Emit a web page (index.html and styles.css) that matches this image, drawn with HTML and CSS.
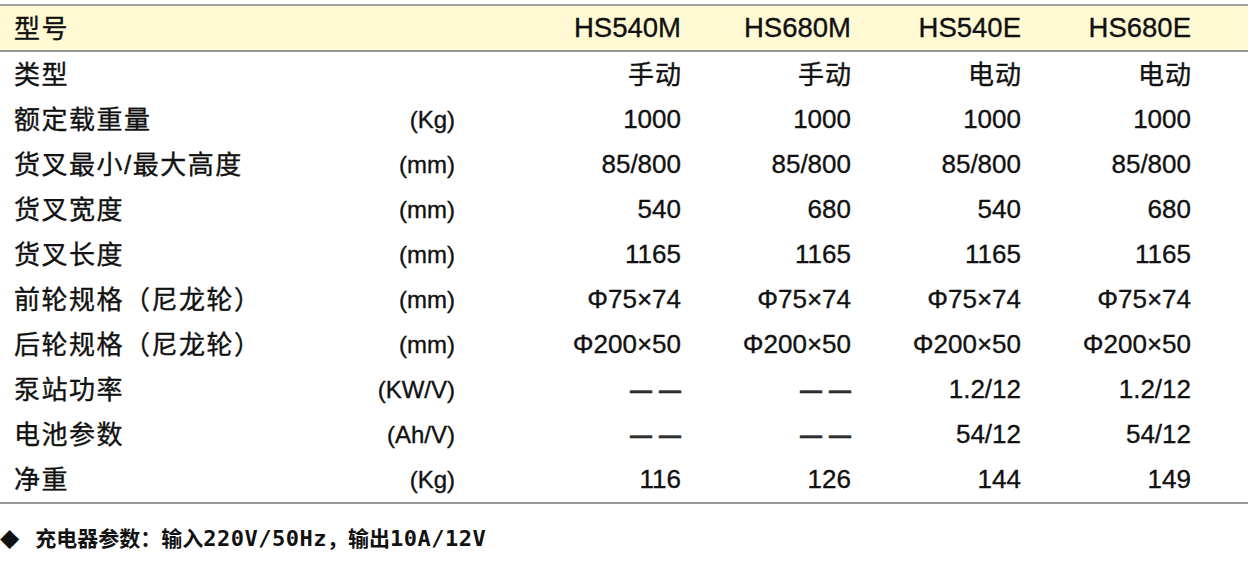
FILE: index.html
```html
<!DOCTYPE html>
<html lang="zh-CN">
<head>
    <meta charset="UTF-8">
    <title>HS 系列参数</title>
    <link rel="stylesheet" href="styles.css">
</head>
<body>

    <!-- Spec table -->
    <div class="spec">
        <div class="row head">
            <span class="label">型号</span>
            <span class="unit"></span>
            <span class="val">HS540M</span>
            <span class="val">HS680M</span>
            <span class="val">HS540E</span>
            <span class="val">HS680E</span>
        </div>
        <div class="row">
            <span class="label">类型</span>
            <span class="unit"></span>
            <span class="val cn">手动</span>
            <span class="val cn">手动</span>
            <span class="val cn">电动</span>
            <span class="val cn">电动</span>
        </div>
        <div class="row">
            <span class="label">额定载重量</span>
            <span class="unit">(Kg)</span>
            <span class="val">1000</span>
            <span class="val">1000</span>
            <span class="val">1000</span>
            <span class="val">1000</span>
        </div>
        <div class="row">
            <span class="label">货叉最小/最大高度</span>
            <span class="unit">(mm)</span>
            <span class="val">85/800</span>
            <span class="val">85/800</span>
            <span class="val">85/800</span>
            <span class="val">85/800</span>
        </div>
        <div class="row">
            <span class="label">货叉宽度</span>
            <span class="unit">(mm)</span>
            <span class="val">540</span>
            <span class="val">680</span>
            <span class="val">540</span>
            <span class="val">680</span>
        </div>
        <div class="row">
            <span class="label">货叉长度</span>
            <span class="unit">(mm)</span>
            <span class="val">1165</span>
            <span class="val">1165</span>
            <span class="val">1165</span>
            <span class="val">1165</span>
        </div>
        <div class="row">
            <span class="label">前轮规格（尼龙轮）</span>
            <span class="unit">(mm)</span>
            <span class="val">Φ75×74</span>
            <span class="val">Φ75×74</span>
            <span class="val">Φ75×74</span>
            <span class="val">Φ75×74</span>
        </div>
        <div class="row">
            <span class="label">后轮规格（尼龙轮）</span>
            <span class="unit">(mm)</span>
            <span class="val">Φ200×50</span>
            <span class="val">Φ200×50</span>
            <span class="val">Φ200×50</span>
            <span class="val">Φ200×50</span>
        </div>
        <div class="row">
            <span class="label">泵站功率</span>
            <span class="unit">(KW/V)</span>
            <span class="val"><span class="dash">——</span></span>
            <span class="val"><span class="dash">——</span></span>
            <span class="val">1.2/12</span>
            <span class="val">1.2/12</span>
        </div>
        <div class="row">
            <span class="label">电池参数</span>
            <span class="unit">(Ah/V)</span>
            <span class="val"><span class="dash">——</span></span>
            <span class="val"><span class="dash">——</span></span>
            <span class="val">54/12</span>
            <span class="val">54/12</span>
        </div>
        <div class="row">
            <span class="label">净重</span>
            <span class="unit">(Kg)</span>
            <span class="val">116</span>
            <span class="val">126</span>
            <span class="val">144</span>
            <span class="val">149</span>
        </div>
    </div>

    <!-- Charger note -->
    <p class="note"><span class="diamond">◆</span>充电器参数：输入<span class="mono">220V/50Hz</span>，输出<span class="mono">10A/12V</span></p>

</body>
</html>
```

FILE: styles.css
```css
/* General Styles */
body {
    font-family: "Liberation Sans", "Noto Sans CJK SC", sans-serif;
    margin: 0;
    background-color: rgb(255, 255, 255);
    color: rgb(17, 17, 17);
}

/* Spec table */
.spec {
    width: 1248px;
    margin-top: 4px;
    border-bottom: 2px solid rgb(150, 150, 150);
    -webkit-text-stroke: 0.35px rgb(17, 17, 17);
}

.row {
    display: grid;
    grid-template-columns: 290px 151px 226px 170px 170px 170px;
    align-items: center;
    height: 45px;
    padding: 0 57px 0 14px;
    font-size: 26px;
}

.row.head {
    height: 44px;
    background-color: rgb(255, 249, 212);
    border-top: 2px solid rgb(160, 160, 160);
    border-bottom: 2px solid rgb(150, 150, 150);
}

.row.head .val {
    font-size: 27.5px;
}

.label {
    font-size: 26px;
    letter-spacing: 1.5px;
    white-space: nowrap;
    margin-bottom: 4px;
}

.unit {
    font-size: 24px;
    text-align: right;
}

.val {
    text-align: right;
    white-space: nowrap;
}

/* Chinese cells sit a little high, like the labels */
.val.cn {
    margin-bottom: 4px;
    letter-spacing: 1px;
    margin-right: -1px;
}

.dash {
    font-size: 22px;
    font-weight: bold;
    letter-spacing: 7px;
    margin-right: -7px;
    color: rgb(50, 50, 50);
}

/* Note under the table */
.note {
    margin: 20px 0 0;
    font-family: "Noto Sans CJK SC", sans-serif;
    font-size: 21px;
    font-weight: bold;
    line-height: 26px;
}

.diamond {
    font-family: "DejaVu Sans", sans-serif;
    font-size: 25px;
    margin-right: 16px;
}

.mono {
    font-family: "DejaVu Sans Mono", monospace;
    font-size: 22px;
    letter-spacing: 0.5px;
}
```
